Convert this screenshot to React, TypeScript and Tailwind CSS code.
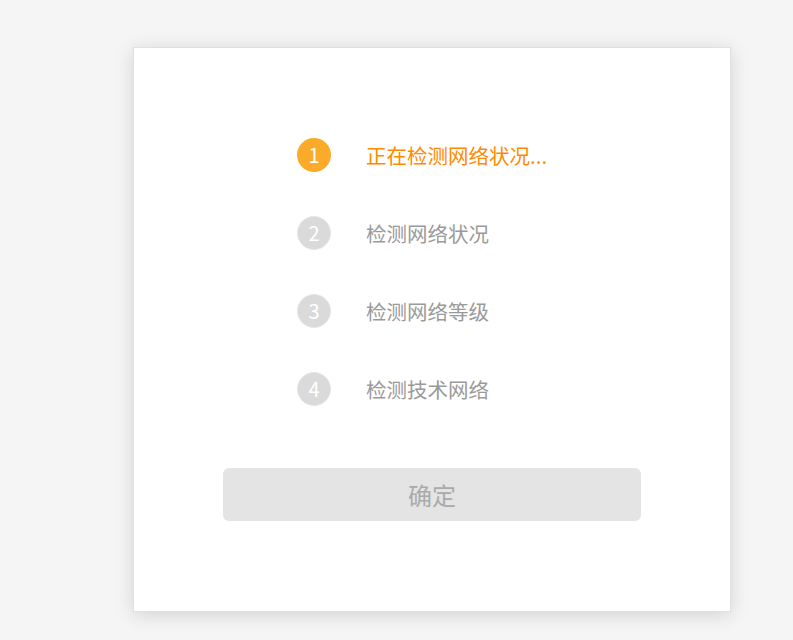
const steps = [
  { n: 1, label: "正在检测网络状况...", active: true },
  { n: 2, label: "检测网络状况", active: false },
  { n: 3, label: "检测网络等级", active: false },
  { n: 4, label: "检测技术网络", active: false },
];

export default function App() {
  return (
    <div
      className="min-h-[640px] w-full bg-[#f5f5f5] pt-[47px] pl-[133px]"
      style={{ fontFamily: '"Noto Sans CJK SC", "Noto Sans", sans-serif' }}
    >
      <div className="w-[598px] h-[565px] bg-white border border-[#e0e0e0] shadow-[0_3px_18px_rgba(0,0,0,0.14)] flex flex-col">
        <div className="pt-[90px] pl-[163px] flex flex-col gap-[44px]">
          {steps.map((s) => (
            <div key={s.n} className="flex items-center h-[34px]">
              <div
                className={
                  s.active
                    ? "w-[34px] h-[34px] rounded-full bg-[#fbab29] text-white flex items-center justify-center text-[20px]"
                    : "w-[34px] h-[34px] rounded-full bg-[#dadada] border border-[#e6e6e6] text-white flex items-center justify-center text-[20px]"
                }
              >
                {s.n}
              </div>
              <span
                className={
                  s.active
                    ? "ml-[35px] text-[20.5px] text-[#ff8a00]"
                    : "ml-[35px] text-[20.5px] text-[#9a9a9a]"
                }
              >
                {s.label}
              </span>
            </div>
          ))}
        </div>
        <button className="mt-[62px] mx-auto w-[418px] h-[53px] rounded-[6px] bg-[#e4e4e4] text-[#aaaaaa] text-[24px]">
          确定
        </button>
      </div>
    </div>
  );
}
